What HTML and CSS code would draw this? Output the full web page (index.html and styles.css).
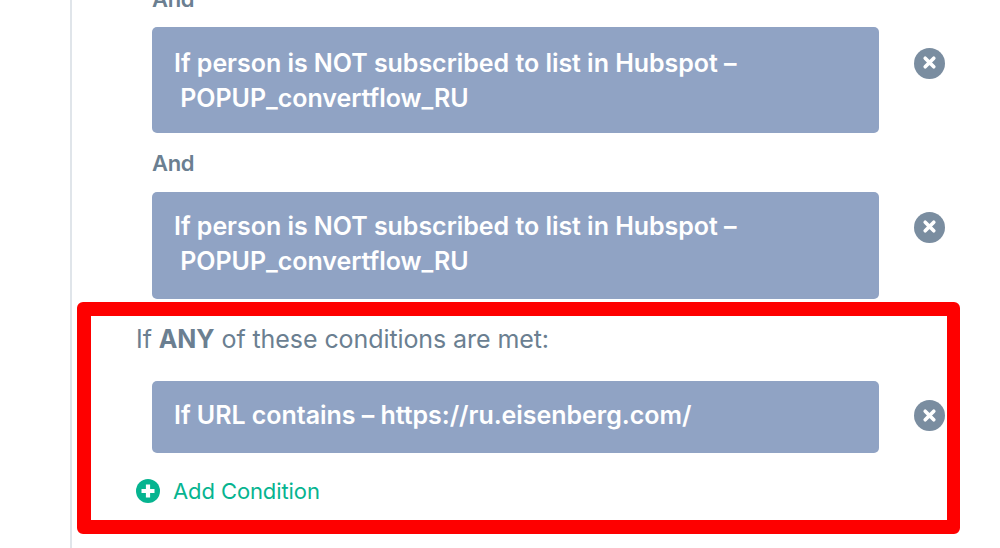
FILE: index.html
```html
<!DOCTYPE html>
<html lang="en">
  <head>
    <meta charset="UTF-8" />
    <meta name="viewport" content="width=device-width, initial-scale=1.0" />
    <title>Conditions</title>
    <link rel="stylesheet" href="styles.css">
  </head>
  <body>
    <!-- shared icon for the remove buttons -->
    <svg class="sprite">
      <symbol id="cross" viewBox="0 0 14 14">
        <path d="M3 3L11 11M11 3L3 11" stroke="#fff" stroke-width="3.4" stroke-linecap="round" />
      </symbol>
    </svg>
    <div class="conditions">
      <p class="and">And</p>
      <div class="row row-first">
        <div class="card">If person is NOT subscribed to list in Hubspot –<br />&nbsp;POPUP_convertflow_RU</div>
        <button class="remove remove-up"><svg><use href="#cross" /></svg></button>
      </div>
      <p class="and">And</p>
      <div class="row row-second">
        <div class="card">If person is NOT subscribed to list in Hubspot –<br />&nbsp;POPUP_convertflow_RU</div>
        <button class="remove remove-up"><svg><use href="#cross" /></svg></button>
      </div>
      <h2 class="any">If <b>ANY</b> of these conditions are met:</h2>
      <div class="row row-url">
        <div class="card">If URL contains – https://ru.eisenberg.com/</div>
        <button class="remove"><svg><use href="#cross" /></svg></button>
      </div>
      <a class="add">
        <svg viewBox="0 0 24 24">
          <circle cx="12" cy="12" r="12" fill="#06b490" />
          <path d="M12 5.5V18.5M5.5 12H18.5" stroke="#fff" stroke-width="4.2" />
        </svg>
        <span>Add Condition</span>
      </a>
    </div>
    <div class="highlight"></div>
  </body>
</html>
```
FILE: styles.css
```css
body {
  margin: 0;
  height: 548px;
  overflow: hidden;
  background: #fff;
  font-family: Inter, "Liberation Sans", sans-serif;
  color: #6b7f91;
}
.sprite {
  display: none;
}
.conditions {
  box-sizing: border-box;
  display: flow-root;
  height: 548px;
  margin-left: 70px;
  padding-left: 64px;
  border-left: 2px solid #e0e5ea;
}
.and {
  box-sizing: border-box;
  margin: 0 0 0 16px;
  padding-top: 1px;
  font-size: 22px;
  font-weight: 600;
  letter-spacing: -0.3px;
  line-height: 59px;
  height: 59px;
}
.and:first-child {
  margin-top: -32px;
  padding-top: 2px;
}
.row {
  display: flex;
  align-items: flex-start;
  gap: 35px;
  margin-left: 16px;
}
.card {
  box-sizing: border-box;
  width: 727px;
  height: 106px;
  padding: 17px 22px;
  border-radius: 5px;
  background: #90a3c4;
  color: #fff;
  font-size: 25px;
  font-weight: 600;
  letter-spacing: -0.04px;
  line-height: 35px;
  white-space: nowrap;
}
.row-first .card {
  padding-top: 19px;
}
.row-second .card {
  height: 107px;
}
.row-url .card {
  height: 72px;
}
.remove {
  display: flex;
  align-items: center;
  justify-content: center;
  width: 31px;
  height: 31px;
  margin-top: 21px;
  padding: 0;
  border: none;
  border-radius: 50%;
  background: #7a8da0;
}
.row-second .remove {
  margin-top: 20px;
}
.row-url .remove {
  margin-top: 19px;
}
.remove-up {
  padding-bottom: 3px;
}
.remove svg {
  flex: none;
  width: 15px;
  height: 15px;
}
.any {
  margin: 25px 0 26px;
  font-size: 25px;
  font-weight: 400;
  letter-spacing: -0.08px;
  line-height: 31px;
}
.any b {
  font-weight: 650;
}
.add {
  display: flex;
  align-items: center;
  gap: 13px;
  margin-top: 23px;
  color: #06b490;
  font-size: 22px;
  letter-spacing: -0.1px;
  line-height: 30px;
}
.add svg {
  width: 24px;
  height: 24px;
}
/* red frame lies over the last group */
.highlight {
  box-sizing: border-box;
  position: absolute;
  left: 77px;
  top: 302px;
  width: 883px;
  height: 232px;
  border: 14px solid #fe0000;
  border-right-width: 13px;
  border-radius: 6px;
}
```
